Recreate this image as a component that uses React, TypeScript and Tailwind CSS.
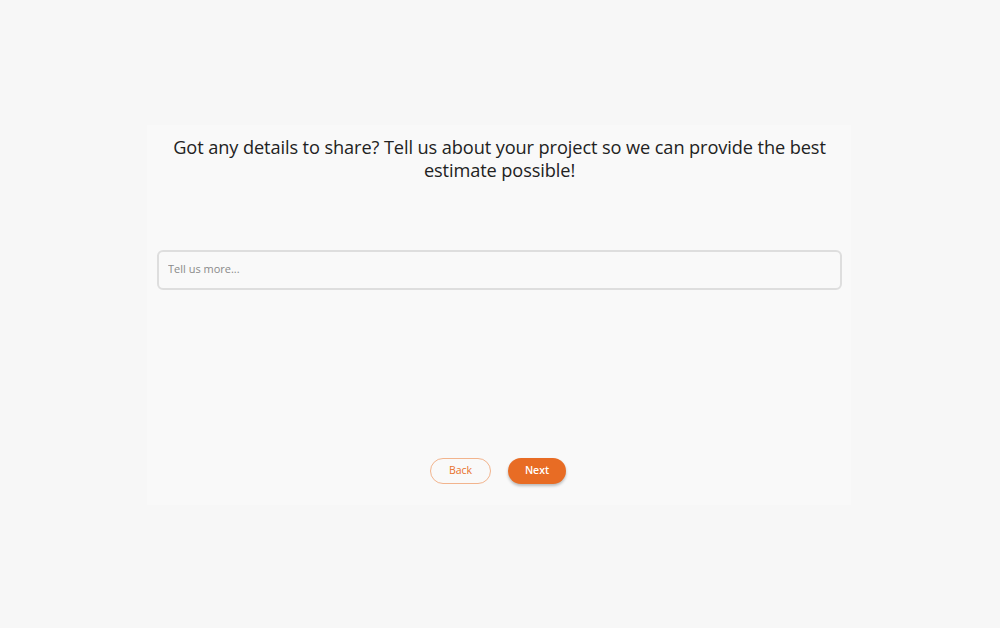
export default function App() {
  return (
    <div
      className="min-h-screen w-full bg-[#f7f7f7] flex items-start justify-center pt-[125px]"
      style={{ fontFamily: '"Open Sans", "Liberation Sans", sans-serif' }}
    >
      <div className="w-[704px] h-[380px] mr-[2px] bg-[#f9f9f9] flex flex-col items-center pl-[10px] pr-[9px]">
        <h1 className="mt-[11px] w-[670px] text-center text-[18.2px] leading-[23px] text-[#222] tracking-[-0.1px]">
          Got any details to share? Tell us about your project so we can provide the best estimate possible!
        </h1>

        <div className="mt-[68px] w-full">
          <input
            type="text"
            placeholder="Tell us more..."
            className="w-full h-[40px] rounded-[6px] border-2 border-[#dedede] bg-[#f9f9f9] px-[9px] pb-[3px] text-[11px] text-[#444] placeholder:text-[#8a8a8a] outline-none"
          />
        </div>

        <div className="mt-[168px] mr-[3px] flex items-center gap-[17px]">
          <button className="w-[61px] h-[26px] rounded-full border border-[#f2b48d] bg-transparent text-[10.5px] text-[#e8702a]">
            Back
          </button>
          <button className="w-[58px] h-[26px] rounded-full bg-[#e86c24] text-[10.5px] font-semibold text-white shadow-[0_2px_3px_rgba(0,0,0,0.25)]">
            Next
          </button>
        </div>
      </div>
    </div>
  )
}
